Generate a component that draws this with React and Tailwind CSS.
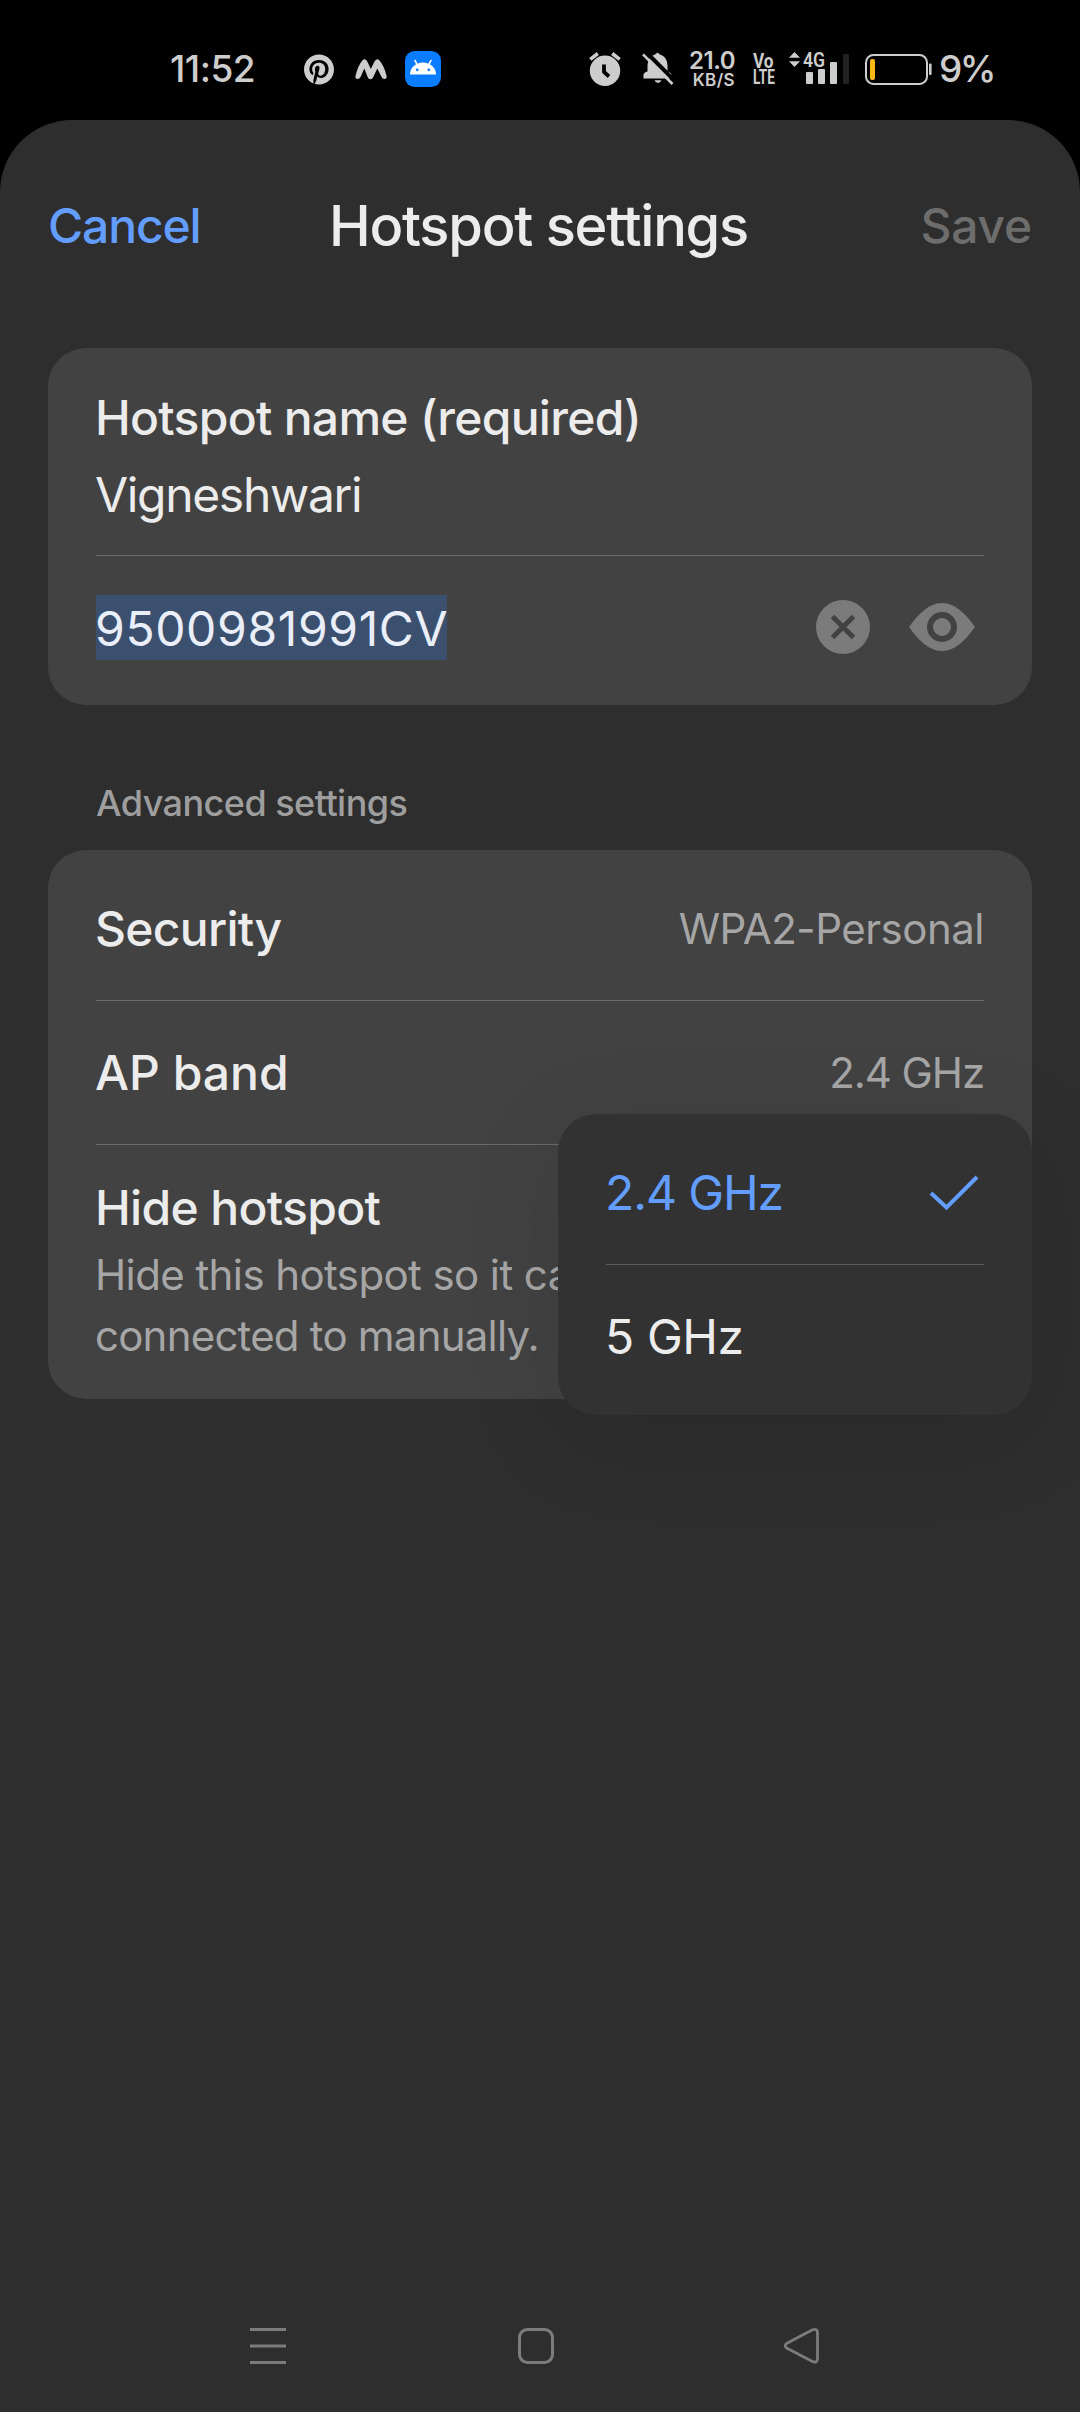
import React from "react";
import { FaPinterest } from "react-icons/fa";

function StatusBar() {
  return (
    <div className="flex h-[120px] items-center bg-black pt-[18px] pl-[170px] text-[#cdcdcd]">
      <div className="mb-px w-[134px] text-[37px] leading-[44px] font-medium tracking-[-0.5px]">11:52</div>
      <FaPinterest className="h-[31px] w-[30px]" />
      <svg className="ml-[20px] h-[60px] w-[34px]" viewBox="354 39 34 60" fill="currentColor">
        <path d="M355.500 76 Q358 65.500 362.300 60.500 Q365 57.500 367.300 61.500 L370.800 69 L374.500 61.500 Q377 57.500 379.500 60.500 Q384 65.500 386.600 76 Q387 78.800 384.500 79 Q382.500 79 381.300 76.500 L377.300 68.500 L373.300 77 Q372.300 79.300 370.300 79.300 Q368.500 79.300 367.600 77 L364.300 68.500 L360.800 76.500 Q359.500 79 357.500 79 Q355 78.800 355.500 76 Z" />
      </svg>
      <svg className="ml-[17px] h-[60px] w-[36px]" viewBox="405 39 36 60">
        <rect x="405" y="51" width="36" height="36" rx="9.500" fill="#0a7cff" />
        <path d="M410 74.500 A13 12 0 0 1 436 74.500 Z" fill="#fff" />
        <path d="M415 60.500 L417.500 65 M431 60.500 L428.500 65" stroke="#fff" strokeWidth="1.600" strokeLinecap="round" />
        <circle cx="417.200" cy="69.800" r="1.400" fill="#0a7cff" />
        <circle cx="428.800" cy="69.800" r="1.400" fill="#0a7cff" />
      </svg>

      <svg className="ml-[147px] h-[60px] w-[34px]" viewBox="588 39 34 60">
        <circle cx="605" cy="70.800" r="15.200" fill="currentColor" />
        <path d="M590.300 59.300 L597.800 53.500 M612.200 53.500 L619.700 59.300" stroke="currentColor" strokeWidth="3.600" />
        <path d="M604 64.500 V72 L609 76.500" fill="none" stroke="#000" strokeWidth="3.800" />
      </svg>
      <svg className="ml-[20px] h-[60px] w-[32px]" viewBox="642 39 32 60">
        <path
          d="M643.500 78.500 V75 Q643.500 72.500 647.500 71.500 V65 Q648 56.500 655.500 54.300 Q657.500 51.300 659.500 54.300 Q667 56.500 667.500 65 V71.500 Q671.500 72.500 671.500 75 V78.500 Z M654.500 80.300 H661.500 Q660.500 83 658 83 Q655.500 83 654.500 80.300 Z"
          fill="currentColor"
        />
        <path d="M646.500 52.500 L675 81" stroke="#000" strokeWidth="4" />
        <path d="M643 54.300 L672.500 84" stroke="currentColor" strokeWidth="2.600" />
      </svg>
      <div className="ml-[15px] flex w-[46px] flex-col items-end pt-[3px] font-semibold">
        <span className="text-[24px] leading-[20px] tracking-[-0.5px]">21.0</span>
        <span className="text-[17px] leading-[19px] tracking-[0.4px]">KB/S</span>
      </div>
      <div className="ml-[18px] flex w-[22px] flex-col font-[Roboto] text-[20px] leading-[16px] font-bold">
        <span className="origin-left scale-x-[0.86]">Vo</span>
        <span className="origin-left scale-x-[0.68]">LTE</span>
      </div>
      <div className="relative ml-[12px]">
        <svg className="h-[60px] w-[64px]" viewBox="787 39 64 60" fill="currentColor">
          <path d="M794.500 52 L800 57.700 H789 Z M794.500 67 L800 61.300 H789 Z" />
          <rect x="806" y="72" width="7" height="12" rx="1" />
          <rect x="818" y="69" width="7" height="15" rx="1" />
          <rect x="830" y="62" width="7" height="22" rx="1" />
          <rect x="843" y="54" width="6" height="30" rx="1" fill="#222" />
        </svg>
        <span className="absolute top-[9px] left-[16px] origin-left scale-x-[0.84] font-[Roboto] text-[21px] leading-[24px] font-semibold">4G</span>
      </div>
      <svg className="ml-[14px] h-[60px] w-[68px]" viewBox="865 39 68 60">
        <rect x="866" y="55" width="61" height="29" rx="7.500" fill="none" stroke="currentColor" strokeWidth="2" />
        <rect x="870" y="59" width="5" height="21" rx="2" fill="#fdb813" />
        <rect x="929" y="63.500" width="2.600" height="11.500" rx="1" fill="currentColor" />
      </svg>
      <div className="mb-px ml-[6px] text-[37px] leading-[44px] font-medium tracking-[-2.5px]">9%</div>
    </div>
  );
}

function Header() {
  return (
    <div className="grid h-[211px] grid-cols-[1fr_auto_1fr] items-center px-12 text-[48px] font-medium">
      <span className="tracking-[-1.15px] text-[#629dff]">Cancel</span>
      <h1 className="pr-[3px] text-[56px] font-medium tracking-[-1.25px]">Hotspot settings</h1>
      <span className="justify-self-end tracking-[-0.23px] text-[#6d6d6d]">Save</span>
    </div>
  );
}

function NameCard() {
  return (
    <section className="mx-12 mt-[17px] h-[357px] rounded-[38px] bg-[#424242] px-12 pt-[39px] text-[48px]">
      <p className="-ml-px leading-[61px] font-medium tracking-[-0.7px]">Hotspot name (required)</p>
      <p className="-ml-px leading-[94px] tracking-[-1.33px]">Vigneshwari</p>
      <div className="mt-[13px] h-px bg-[#6a6a6a]" />
      <div className="flex h-[142px] items-center">
        <span className="h-[65px] w-[351px] bg-[#3b506f] indent-[-1px] leading-[67px] tracking-[0.63px] whitespace-nowrap text-[#e9eef8]">9500981991CV</span>
        <svg className="ml-auto size-[54px]" viewBox="-27 -27 54 54">
          <circle r="27" fill="#7b7b7b" />
          <path d="M-10.500 -10.500 L10.500 10.500 M10.500 -10.500 L-10.500 10.500" stroke="#424242" strokeWidth="5" />
        </svg>
        <svg className="mr-[9px] ml-[39px] h-[48px] w-[66px]" viewBox="-33 -24 66 48">
          <path d="M-33 0 C-25 -11 -14 -24 0 -24 C14 -24 25 -11 33 0 C25 11 14 24 0 24 C-14 24 -25 11 -33 0 Z" fill="#7b7b7b" />
          <circle r="12" fill="none" stroke="#424242" strokeWidth="6" />
        </svg>
      </div>
    </section>
  );
}

function BandMenu() {
  return (
    <div className="absolute top-[264px] left-[510px] h-[301px] w-[474px] rounded-[38px] bg-[#323232] px-12 pt-[7px] text-[48px] shadow-[0_20px_100px_0_rgba(0,0,0,0.11)]">
      <div className="flex h-[143px] items-center justify-between text-[#629dff]">
        <span className="-ml-px tracking-[-1.1px]">2.4 GHz</span>
        <svg className="mr-[5px] h-[36px] w-[50px]" viewBox="929 1174 50 36" fill="none" stroke="currentColor" strokeWidth="4">
          <path d="M931 1192 L946.500 1206.500 L977 1176" />
        </svg>
      </div>
      <div className="h-px bg-[#5c5c5c]" />
      <div className="-ml-px flex h-[143px] items-center tracking-[-0.4px]">5 GHz</div>
    </div>
  );
}

function AdvancedCard() {
  return (
    <section className="relative mx-12 mt-[17px] h-[549px] rounded-[38px] bg-[#424242] px-12 pt-[7px] text-[48px]">
      <div className="flex h-[143px] items-center justify-between">
        <span className="-ml-px font-medium tracking-[-0.7px]">Security</span>
        <span className="text-[42px] tracking-[-0.5px] text-[#a6a6a6]">WPA2-Personal</span>
      </div>
      <div className="h-px bg-[#6a6a6a]" />
      <div className="flex h-[143px] items-center justify-between">
        <span className="-ml-px font-medium">AP band</span>
        <span className="text-[42px] tracking-[-1.1px] text-[#a6a6a6]">2.4 GHz</span>
      </div>
      <div className="h-px bg-[#6a6a6a]" />
      <p className="mt-[32px] -ml-px leading-[61px] font-medium tracking-[-0.66px]">Hide hotspot</p>
      <p className="mt-[6px] -ml-px text-[42px] leading-[61px] text-[#a6a6a6]">
        <span className="block tracking-[-0.59px]">Hide this hotspot so it can only be</span>
        <span className="block tracking-[-0.78px]">connected to manually.</span>
      </p>
      <BandMenu />
    </section>
  );
}

function NavBar() {
  return (
    <nav className="mt-auto mb-[40px] flex h-[52px] items-center pl-[250px] text-[#7c7c7c]">
      <svg className="h-[40px] w-[36px]" viewBox="250 2326 36 40" stroke="currentColor" strokeWidth="3.200">
        <path d="M250 2329.500 H286 M250 2346 H286 M250 2362.500 H286" />
      </svg>
      <svg className="ml-[232px] h-[40px] w-[36px]" viewBox="518 2326 36 40" fill="none" stroke="currentColor" strokeWidth="3">
        <rect x="519.500" y="2329.500" width="33" height="33" rx="8" />
      </svg>
      <svg className="ml-[229px] h-[40px] w-[38px]" viewBox="783 2326 38 40" fill="none" stroke="currentColor" strokeWidth="2.800" strokeLinejoin="round">
        <path d="M786.500 2343.500 L812.500 2329.800 Q817.500 2328 817.500 2333 V2358.500 Q817.500 2363.500 812.500 2361.500 L786.500 2348 Q784 2345.800 786.500 2343.500 Z" />
      </svg>
    </nav>
  );
}

export default function App() {
  return (
    <div className="h-[2412px] w-[1080px] overflow-hidden bg-black font-[Inter,sans-serif] text-[#ececec]">
      <StatusBar />
      <main className="flex h-[2292px] flex-col rounded-t-[72px] bg-[#2e2e2e]">
        <Header />
        <NameCard />
        <h2 className="mt-[68px] ml-24 text-[36px] leading-[60px] font-medium tracking-[-0.54px] text-[#9e9e9e]">Advanced settings</h2>
        <AdvancedCard />
        <NavBar />
      </main>
    </div>
  );
}
